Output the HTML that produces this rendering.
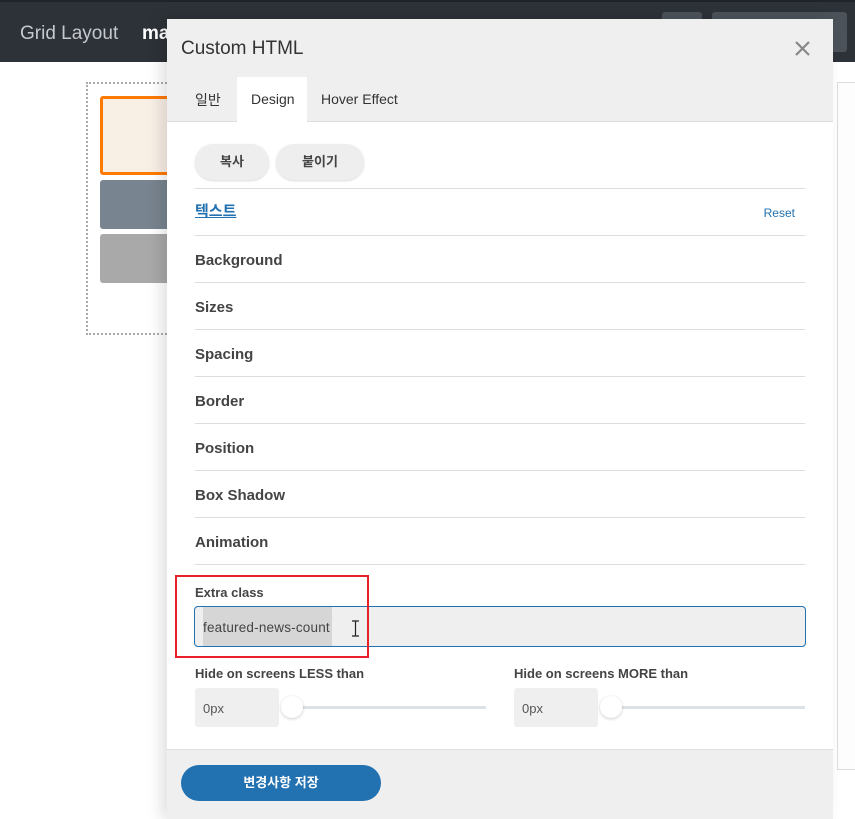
<!DOCTYPE html>
<html><head><meta charset="utf-8"><style>
*{box-sizing:border-box;margin:0;padding:0}
body{width:855px;height:818px;overflow:hidden;background:#fff;font-family:"Liberation Sans","Noto Sans CJK KR",sans-serif;position:relative;color:#333}
.top{position:absolute;left:0;top:0;width:855px;height:62px;background:#2d3238;border-top:2px solid #202327}
.abs{position:absolute}
.modal{position:absolute;left:167px;top:19px;width:666px;height:800px;background:#efefef;box-shadow:-6px 0 14px rgba(0,0,0,.12)}
.row{position:absolute;left:195px;width:610px;height:47px;border-top:1px solid #ddd;font-size:15px;font-weight:bold;color:#444;line-height:50px}
.pill{position:absolute;top:144px;height:36px;border-radius:18px;background:#eee;box-shadow:0 1px 2px rgba(0,0,0,.15);font-size:13px;font-weight:bold;text-align:center;line-height:36px;color:#444}
.lbl{position:absolute;font-size:13px;font-weight:bold;color:#444}
.px{position:absolute;width:84px;height:39px;background:#efefef;border-radius:3px;font-size:13px;color:#555;line-height:41px;padding-left:8px}
.track{position:absolute;height:3px;background:#dde2e6}
.knob{position:absolute;width:22px;height:22px;border-radius:50%;background:#fff;box-shadow:0 1px 3px rgba(0,0,0,.2)}
</style></head><body>
<div class="top"></div>
<div class="abs" style="left:20px;top:23px;font-size:19px;color:#c5c8cc">Grid Layout</div>
<div class="abs" style="left:142px;top:23px;font-size:19px;color:#fff;font-weight:bold">ma</div>
<div class="abs" style="left:662px;top:12px;width:40px;height:40px;background:#4b5259;border-radius:3px"></div>
<div class="abs" style="left:712px;top:12px;width:135px;height:40px;background:#4b5259;border-radius:3px"></div>
<div class="abs" style="left:86px;top:82px;width:120px;height:253px;border:2px dotted #aaa"></div>
<div class="abs" style="left:100px;top:96px;width:80px;height:79px;border:3px solid #ff7a00;border-radius:3px;background:#f8efe5"></div>
<div class="abs" style="left:100px;top:180px;width:80px;height:49px;background:#78848f;border-radius:3px"></div>
<div class="abs" style="left:100px;top:234px;width:80px;height:49px;background:#a9a9a9;border-radius:3px"></div>
<div class="abs" style="left:837px;top:82px;width:20px;height:688px;border:1px solid #ddd;background:#fdfdfd"></div>
<div class="modal"></div>
<div class="abs" style="left:181px;top:38px;font-size:19px;color:#333">Custom HTML</div>
<svg class="abs" style="left:795px;top:41px" width="15" height="15" viewBox="0 0 15 15"><path d="M1 1L14 14M14 1L1 14" stroke="#888" stroke-width="2.2"/></svg>
<div class="abs" style="left:167px;top:121px;width:666px;height:1px;background:#ddd"></div>
<div class="abs" style="left:167px;top:122px;width:666px;height:628px;background:#fff"></div>
<div class="abs" style="left:237px;top:77px;width:70px;height:46px;background:#fff"></div>
<div class="abs" style="left:195px;top:90px;font-size:14px;color:#333">일반</div>
<div class="abs" style="left:251px;top:91px;font-size:14px;color:#333">Design</div>
<div class="abs" style="left:321px;top:91px;font-size:14px;color:#333">Hover Effect</div>
<div class="pill" style="left:195px;width:74px">복사</div>
<div class="pill" style="left:276px;width:88px">붙이기</div>
<div class="row" style="top:188px;color:#2271b1;font-weight:bold;line-height:46px"><span style="text-decoration:underline">텍스트</span><span style="position:absolute;right:10px;font-size:12px;font-weight:normal;line-height:48px">Reset</span></div>
<div class="row" style="top:235px">Background</div>
<div class="row" style="top:282px">Sizes</div>
<div class="row" style="top:329px">Spacing</div>
<div class="row" style="top:376px">Border</div>
<div class="row" style="top:423px">Position</div>
<div class="row" style="top:470px">Box Shadow</div>
<div class="row" style="top:517px">Animation</div>
<div class="abs" style="left:195px;top:564px;width:610px;height:1px;background:#ddd"></div>
<div class="lbl" style="left:195px;top:585px">Extra class</div>
<div class="abs" style="left:194px;top:606px;width:612px;height:41px;border:1px solid #2271b1;border-radius:4px;background:#efefef"></div>
<div class="abs" style="left:203px;top:607px;width:129px;height:39px;background:#d6d6d6"></div>
<div class="abs" style="left:203px;top:620px;font-size:13.5px;color:#444;letter-spacing:0.2px">featured-news-count</div>
<svg class="abs" style="left:351px;top:620px" width="9" height="17" viewBox="0 0 9 17"><path d="M1 1H8M4.5 1V16M1 16H8" stroke="#222" stroke-width="1.2" fill="none"/></svg>
<div class="abs" style="left:175px;top:575px;width:194px;height:83px;border:2px solid #e8202a"></div>
<div class="lbl" style="left:195px;top:666px">Hide on screens LESS than</div>
<div class="lbl" style="left:514px;top:666px">Hide on screens MORE than</div>
<div class="px" style="left:195px;top:688px">0px</div>
<div class="px" style="left:514px;top:688px">0px</div>
<div class="track" style="left:290px;top:706px;width:196px"></div>
<div class="track" style="left:609px;top:706px;width:196px"></div>
<div class="knob" style="left:281px;top:696px"></div>
<div class="knob" style="left:600px;top:696px"></div>
<div class="abs" style="left:167px;top:749px;width:666px;height:1px;background:#ddd"></div>
<div class="abs" style="left:181px;top:765px;width:200px;height:36px;border-radius:18px;background:#2271b1;color:#fff;font-size:13px;font-weight:bold;text-align:center;line-height:36px">변경사항 저장</div>
</body></html>
